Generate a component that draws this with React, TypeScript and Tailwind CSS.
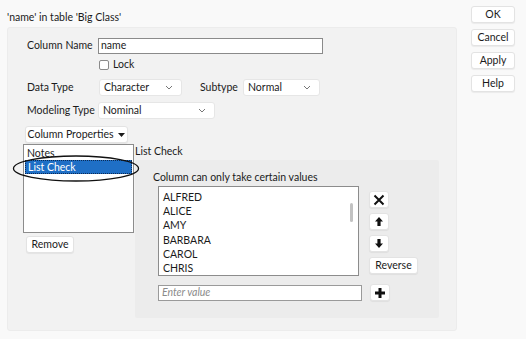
import React from "react";

const VALUES = ["ALFRED", "ALICE", "AMY", "BARBARA", "CAROL", "CHRIS"];

const btn =
  "flex shrink-0 items-center justify-center whitespace-nowrap rounded-[3px] border border-[#e3e3e3] bg-white shadow-[0_1px_1px_rgba(0,0,0,0.06)] text-[10.5px] leading-none text-[#1b1b1b]";

function Chevron() {
  return (
    <svg width="8" height="5" viewBox="0 0 8 5" className="text-[#777]">
      <path d="M1 1 L4 4 L7 1" fill="none" stroke="currentColor" strokeWidth="1" />
    </svg>
  );
}

function Select({ value, width }: { value: string; width: string }) {
  return (
    <div
      className={`${width} flex h-[17px] shrink-0 items-center justify-between rounded-[3px] border border-[#e6e6e6] bg-white pl-[4px] pr-[8px]`}
    >
      <span>{value}</span>
      <Chevron />
    </div>
  );
}

function IconButton({ children }: { children: React.ReactNode }) {
  return <div className={`${btn} h-[17px] w-[20px]`}>{children}</div>;
}

export default function App() {
  return (
    <div className="relative flex h-[339px] w-[526px] whitespace-nowrap bg-[#f9f9f9] font-['Lato',sans-serif] text-[10.5px] text-[#1b1b1b]">
      <div className="flex flex-col pl-[7px] pt-[10px]">
        <div className="h-[14px] leading-[14px]">'name' in table 'Big Class'</div>

        <div className="mt-[3px] flex h-[304px] w-[450px] flex-col rounded-[3px] border border-[#ececec] bg-[#f2f2f2] pl-[19px] pt-[10px]">
          <div className="flex h-[16px] items-center">
            <span className="w-[71px] shrink-0">Column Name</span>
            <div className="flex h-[16px] w-[225px] items-center border border-[#8a8a8a] bg-white pl-[2px]">
              name
            </div>
          </div>

          <div className="mt-[5px] flex h-[12px] items-center pl-[72px]">
            <span className="mr-[4px] h-[10px] w-[10px] rounded-[2px] border border-[#8a8a8a] bg-white" />
            Lock
          </div>

          <div className="mt-[8px] flex h-[17px] items-center">
            <span className="w-[72px] shrink-0">Data Type</span>
            <Select value="Character" width="w-[83px]" />
            <span className="ml-[18px] w-[43px] shrink-0">Subtype</span>
            <Select value="Normal" width="w-[77px]" />
          </div>

          <div className="mt-[6px] flex h-[17px] items-center">
            <span className="w-[71px] shrink-0">Modeling Type</span>
            <Select value="Nominal" width="w-[117px]" />
          </div>

          <div className="-ml-[2px] mt-[7px] flex">
            <div className={`${btn} h-[17px] w-[103px] gap-[5px]`}>
              Column Properties
              <svg width="7" height="4" viewBox="0 0 7 4">
                <path d="M0 0 H7 L3.5 4 Z" fill="#1b1b1b" />
              </svg>
            </div>
          </div>

          <div className="-ml-[4px] mt-[1px] flex">
            <div className="flex w-[112px] flex-col">
              <div className="h-[89px] w-[111px] border border-[#8c8c8c] bg-white p-[1px]">
                <div className="h-[14px] pl-[2px] leading-[14px]">Notes</div>
                <div className="h-[14px] border border-dotted border-[#0b2a55] bg-[#1f6fc6] pl-[2px] leading-[12px] text-white">
                  List Check
                </div>
              </div>
              <div className={`${btn} ml-[3px] mt-[3px] h-[17px] w-[48px]`}>Remove</div>
            </div>

            <div className="flex flex-col">
              <div className="h-[16px] leading-[14px]">List Check</div>
              <div className="flex h-[158px] w-[304px] flex-col rounded-[2px] bg-[#ececec] pl-[18px] pt-[10px]">
                <div className="h-[14px] leading-[14px]">Column can only take certain values</div>

                <div className="ml-[5px] mt-[2px] flex">
                  <div className="relative h-[90px] w-[201px] border border-[#8c8c8c] bg-white pl-[4px] pt-[3px]">
                    {VALUES.map((v) => (
                      <div key={v} className="h-[14.2px] leading-[14px]">
                        {v}
                      </div>
                    ))}
                    <div className="absolute right-[5px] top-[16px] h-[19px] w-[3px] rounded-full bg-[#c2c2c2]" />
                  </div>

                  <div className="ml-[10px] mt-[5px] flex flex-col gap-[5px]">
                    <IconButton>
                      <svg width="12" height="12" viewBox="0 0 12 12">
                        <path d="M1.5 1.5 L10.5 10.5 M10.5 1.5 L1.5 10.5" stroke="#111" strokeWidth="2" />
                      </svg>
                    </IconButton>
                    <IconButton>
                      <svg width="8" height="9" viewBox="0 0 8 9">
                        <path d="M4 0 L8 4.5 H5.6 V9 H2.4 V4.5 H0 Z" fill="#111" />
                      </svg>
                    </IconButton>
                    <IconButton>
                      <svg width="8" height="9" viewBox="0 0 8 9">
                        <path d="M4 9 L8 4.5 H5.6 V0 H2.4 V4.5 H0 Z" fill="#111" />
                      </svg>
                    </IconButton>
                    <div className={`${btn} h-[17px] w-[49px]`}>Reverse</div>
                  </div>
                </div>

                <div className="ml-[5px] mt-[8px] flex items-center">
                  <div className="flex h-[16px] w-[204px] items-center border border-[#9a9a9a] bg-white pl-[3px] italic text-[#8a8a8a]">
                    Enter value
                  </div>
                  <div className="ml-[8px]">
                    <IconButton>
                      <svg width="10" height="10" viewBox="0 0 10 10">
                        <path d="M5 0 V10 M0 5 H10" stroke="#111" strokeWidth="3" />
                      </svg>
                    </IconButton>
                  </div>
                </div>
              </div>
            </div>
          </div>
        </div>
      </div>

      <div className="ml-[14px] flex flex-col gap-[6px] pt-[6px]">
        <div className={`${btn} h-[17px] w-[44px]`}>OK</div>
        <div className={`${btn} h-[17px] w-[44px]`}>Cancel</div>
        <div className={`${btn} h-[17px] w-[44px]`}>Apply</div>
        <div className={`${btn} h-[17px] w-[44px]`}>Help</div>
      </div>

      <svg className="pointer-events-none absolute left-[12px] top-[154px]" width="128" height="29" viewBox="0 0 128 29">
        <ellipse cx="64" cy="14.5" rx="62.5" ry="12.5" fill="none" stroke="#111" strokeWidth="1.3" />
      </svg>
    </div>
  );
}
